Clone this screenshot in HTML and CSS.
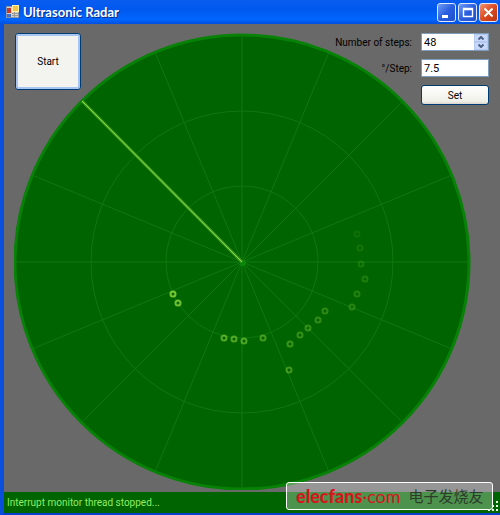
FILE: index.html
```html
<!DOCTYPE html>
<html lang="en">
  <head>
    <meta charset="utf-8">
    <title>Ultrasonic Radar</title>
    <link rel="stylesheet" href="styles.css">
  </head>
  <body>
    <div class="window">
      <header class="titlebar">
        <svg class="app-icon" viewBox="0 0 14 14" width="14" height="14">
          <rect x="0.5" y="1.5" width="12" height="11" fill="#d8d4c8" stroke="#8a93a8"/>
          <rect x="1" y="3" width="4" height="5" fill="#c33a2c"/>
          <rect x="6.5" y="0.5" width="6" height="6" fill="#f3c544" stroke="#fff0b0"/>
          <rect x="1" y="9" width="4" height="3" fill="#3d6fd0"/>
          <path d="M6 8.500h6M6 10.500h6M8.500 7v5" stroke="#999"/>
        </svg>
        <h1 class="title">Ultrasonic Radar</h1>
        <div class="caption-buttons">
          <button class="caption" type="button" aria-label="Minimize">
            <svg viewBox="0 0 17 17" width="17" height="17"><rect x="4" y="11" width="6" height="3" fill="#fff"/></svg>
          </button>
          <button class="caption" type="button" aria-label="Maximize">
            <svg viewBox="0 0 17 17" width="17" height="17"><path d="M4.500 4.500h9v8h-9zM4 5.500h10" fill="none" stroke="#fff" stroke-width="1.400"/></svg>
          </button>
          <button class="caption close" type="button" aria-label="Close">
            <svg viewBox="0 0 17 17" width="17" height="17"><path d="M4.500 4.500l8 8M12.500 4.500l-8 8" stroke="#fff" stroke-width="2"/></svg>
          </button>
        </div>
      </header>

      <main class="client">
        <div class="radar">
          <svg class="scope" viewBox="-228 -229 457 457">
            <circle class="rim" cx="0" cy="0" r="227"/>
            <circle class="ring" cx="0" cy="0" r="76"/>
            <circle class="ring" cx="0" cy="0" r="151"/>
            <g id="spokes"></g>
            <circle class="hub" cx="1" cy="1" r="3"/>
            <path class="sweep-edge" d="M0 0L-160 -161"/>
            <path class="sweep" d="M0 0L-160 -161"/>
            <g id="echoes"></g>
          </svg>
        </div>
        <form class="controls">
          <button class="btn start" type="button">Start</button>
          <div class="settings">
            <label for="steps">Number of steps:</label>
            <div class="field">
              <input id="steps" type="text" value="48">
              <span class="spinner">
                <button type="button" aria-label="Up"><svg viewBox="0 0 6 4" width="6" height="4"><path d="M0.500 3.500L3 1l2.500 2.500"/></svg></button>
                <button type="button" aria-label="Down"><svg viewBox="0 0 6 4" width="6" height="4"><path d="M0.500 0.500L3 3l2.500-2.500"/></svg></button>
              </span>
            </div>
            <label for="angle">°/Step:</label>
            <div class="field">
              <input id="angle" type="text" value="7.5">
            </div>
            <button class="btn set" type="button">Set</button>
          </div>
        </form>
      </main>

      <footer class="statusbar">Interrupt monitor thread stopped...</footer>

      <div class="watermark">
        <span class="brand"><b>elecfans</b>·com</span>
        <span class="brand-cn" lang="zh">电子发烧友</span>
      </div>
      <svg class="grip" viewBox="0 0 12 12" width="12" height="12">
        <path d="M8 0h2v2h-2zM8 4h2v2h-2zM4 4h2v2h-2zM8 8h2v2h-2zM4 8h2v2h-2zM0 8h2v2h-2z"/>
      </svg>
    </div>
    <script src="radar.js"></script>
  </body>
</html>
```

FILE: styles.css
```css
body {
  margin: 0;
  background: #696969;
  font-family: Roboto, "Liberation Sans", sans-serif;
  font-size: 10px;
  color: #000;
}
button, input {
  font: inherit;
  color: inherit;
  box-sizing: border-box;
  margin: 0;
}
svg {
  display: block;
}
.window {
  position: relative;
  border-left: 4px solid #0a4fdc;
  border-bottom: 3px solid #0a3fd0;
}

/* title bar */
.titlebar {
  display: flex;
  align-items: center;
  height: 24px;
  margin-left: -4px;
  padding: 0 2px 0 6px;
  background: linear-gradient(#0a5cf0, #0058ee 40%, #0066ff 80%, #0050e0);
}
.title {
  flex: 1;
  margin: 0 0 0 3px;
  font-family: Lato, sans-serif;
  font-size: 13px;
  line-height: 24px;
  color: #fff;
  text-shadow: 1px 1px #0a2a8c;
}
.caption-buttons {
  display: flex;
  gap: 2px;
}
.caption {
  width: 19px;
  height: 19px;
  padding: 0;
  border: 1px solid #dfe8fc;
  border-radius: 3px;
  background: linear-gradient(135deg, #6f9cf5, #2a5ee0 50%, #1f50cc);
}
.close {
  background: linear-gradient(135deg, #f0936f, #dc4a22 50%, #b93510);
}

/* scope and controls share one grid cell */
.client {
  display: grid;
  background: #696969;
}
.radar, .controls {
  grid-area: 1 / 1;
}
.radar {
  padding: 9px 29px 2px 10px;
}
.scope {
  width: 100%;
}
.rim {
  fill: #006400;
  stroke: #078207;
  stroke-width: 3;
}
.ring, .spoke {
  fill: none;
  stroke: #107810;
  stroke-width: 1;
}
.hub {
  fill: #0a860a;
}
.sweep-edge {
  stroke: #3c9a1c;
  stroke-width: 3;
}
.sweep {
  stroke: #8cdc50;
  stroke-width: 1;
}
.echo {
  fill: none;
  stroke: #8cd83c;
  stroke-width: 2;
}
.controls {
  display: flex;
  justify-content: space-between;
  align-items: flex-start;
  padding: 9px 11px 0 11px;
}
.settings {
  display: grid;
  grid-template-columns: auto 68px;
  column-gap: 9px;
  row-gap: 8px;
  align-items: center;
  justify-items: end;
}
.field {
  display: flex;
  width: 68px;
  height: 18px;
  box-sizing: border-box;
  border: 1px solid #7f9db9;
  background: #fff;
}
.field input {
  flex: 1;
  min-width: 0;
  padding: 0 2px;
  border: 0;
  background: none;
  font-size: 11px;
}
.spinner {
  display: flex;
  flex-direction: column;
  width: 14px;
}
.spinner button {
  display: flex;
  flex: 1;
  align-items: center;
  justify-content: center;
  padding: 0;
  border: 1px solid #b4c8f0;
  background: #c8d8fa;
}
.spinner path {
  fill: none;
  stroke: #4d6185;
  stroke-width: 2;
}
.btn {
  border: 1px solid #003c74;
  border-radius: 3px;
  background: linear-gradient(#fff, #f0f0ea 85%, #d8d4c8);
}
.start {
  width: 66px;
  height: 57px;
  background: #f3f3ef;
  box-shadow: inset 0 0 0 2px #a8c4f0;
}
.set {
  grid-column: 2;
  width: 68px;
  height: 20px;
  padding: 0;
}

/* status bar */
.statusbar {
  height: 21px;
  padding-left: 3px;
  background: #006400;
  line-height: 22px;
  color: #90ee60;
}
.grip {
  position: absolute;
  right: 0;
  bottom: 0;
  fill: #e8f4e0;
}
.watermark {
  position: absolute;
  right: 7px;
  bottom: 3px;
  display: flex;
  align-items: center;
  gap: 8px;
  width: 207px;
  height: 28px;
  box-sizing: border-box;
  padding-left: 9px;
  border: 1px solid #fff;
  border-radius: 3px;
  background: rgba(255, 255, 255, 0.3);
  white-space: nowrap;
}
.brand {
  font-family: Lato, sans-serif;
  font-size: 18px;
  line-height: 24px;
  color: #d8141c;
}
.brand b {
  font-weight: 900;
}
.brand-cn {
  font-family: "Noto Sans CJK SC", sans-serif;
  font-size: 15px;
  line-height: 24px;
  color: #2c3c2c;
}
```

FILE: radar.js
```javascript
var NS = 'http://www.w3.org/2000/svg';
var spokes = document.querySelector('#spokes');
var echoes = document.querySelector('#echoes');

function add(parent, tag, attrs) {
  var node = document.createElementNS(NS, tag);
  for (var key in attrs) {
    node.setAttribute(key, attrs[key]);
  }
  parent.appendChild(node);
}

// one spoke every 22.5 degrees
for (var i = 0; i < 16; i++) {
  var a = i * Math.PI / 8;
  add(spokes, 'line', {
    'class': 'spoke',
    x1: 0, y1: 0,
    x2: 226 * Math.cos(a), y2: 226 * Math.sin(a)
  });
}

// x, y, strength: older echoes fade out
[
  [-69, 32, 0.85], [-64, 41, 0.8],
  [-18, 76, 0.6], [-8, 77, 0.58], [2, 79, 0.55], [21, 76, 0.48],
  [47, 108, 0.45], [48, 82, 0.42], [58, 73, 0.38], [66, 66, 0.36],
  [76, 58, 0.34], [83, 49, 0.32], [110, 45, 0.28], [115, 32, 0.25],
  [123, 17, 0.22], [119, 2, 0.18], [118, -14, 0.14], [115, -28, 0.1]
].forEach(function(e) {
  add(echoes, 'circle', { 'class': 'echo', cx: e[0], cy: e[1], r: 2.5, opacity: e[2] });
});
```
